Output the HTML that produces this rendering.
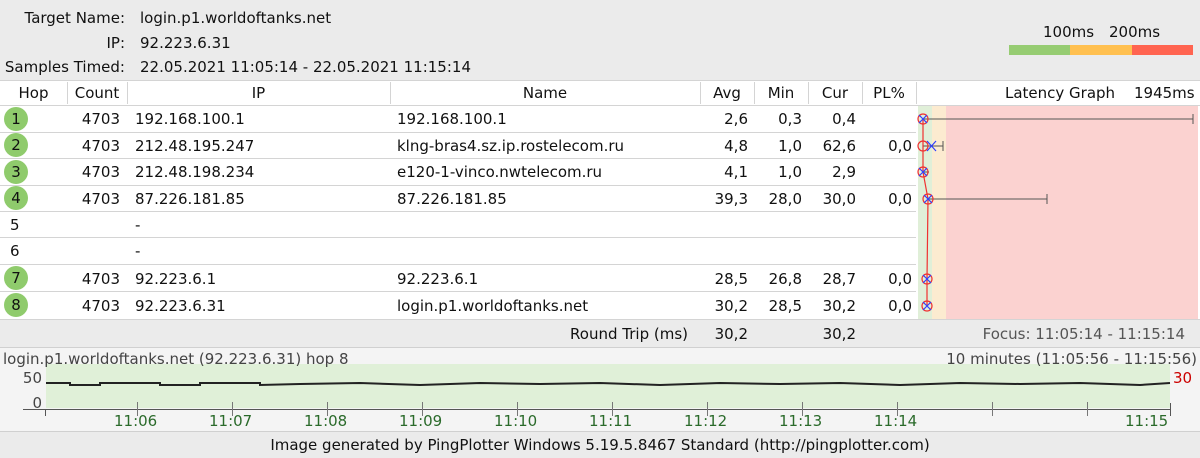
<!DOCTYPE html><html><head><meta charset="utf-8"><style>
*{margin:0;padding:0}body{width:1200px;height:458px;background:#ebebeb;font-family:"DejaVu Sans","Liberation Sans",sans-serif;font-size:15px;color:#111;position:relative;overflow:hidden}
.a{position:absolute;white-space:nowrap;line-height:16px}
.r{text-align:right}
.c{text-align:center}
.circ{position:absolute;width:24px;height:24px;border-radius:50%;background:#8fcb6c;left:4px;text-align:center;line-height:24px;color:#111}
</style></head><body>
<div class="a r" style="left:0;width:125px;top:10px">Target Name:</div>
<div class="a" style="left:140px;top:10px">login.p1.worldoftanks.net</div>
<div class="a r" style="left:0;width:125px;top:35px">IP:</div>
<div class="a" style="left:140px;top:35px">92.223.6.31</div>
<div class="a r" style="left:0;width:125px;top:59px">Samples Timed:</div>
<div class="a" style="left:140px;top:59px">22.05.2021 11:05:14 - 22.05.2021 11:15:14</div>
<div class="a" style="left:1043px;top:24px">100ms</div>
<div class="a" style="left:1109px;top:24px">200ms</div>
<div style="position:absolute;left:1009px;top:45px;width:61px;height:10px;background:#96cc72"></div>
<div style="position:absolute;left:1070px;top:45px;width:62px;height:10px;background:#ffc050"></div>
<div style="position:absolute;left:1132px;top:45px;width:61px;height:10px;background:#ff6450"></div>

<svg style="position:absolute;left:0;top:0" width="1200" height="458">
<rect x="0" y="80" width="1200" height="240" fill="#fff"/>
<g stroke="#d4d4d4" stroke-width="1">
<line x1="0" y1="80.5" x2="1200" y2="80.5"/>
<line x1="0" y1="105.5" x2="1200" y2="105.5"/>
<line x1="0" y1="132.5" x2="916" y2="132.5"/><line x1="0" y1="158.5" x2="916" y2="158.5"/><line x1="0" y1="185.5" x2="916" y2="185.5"/><line x1="0" y1="211.5" x2="916" y2="211.5"/><line x1="0" y1="237.5" x2="916" y2="237.5"/><line x1="0" y1="264.5" x2="916" y2="264.5"/><line x1="0" y1="291.5" x2="916" y2="291.5"/>
<line x1="0" y1="319.5" x2="1200" y2="319.5"/>
<line x1="67.5" y1="82" x2="67.5" y2="104"/><line x1="127.5" y1="82" x2="127.5" y2="104"/><line x1="390.5" y1="82" x2="390.5" y2="104"/><line x1="700.5" y1="82" x2="700.5" y2="104"/><line x1="754.5" y1="82" x2="754.5" y2="104"/><line x1="808.5" y1="82" x2="808.5" y2="104"/><line x1="862.5" y1="82" x2="862.5" y2="104"/><line x1="916.5" y1="82" x2="916.5" y2="104"/>
</g>
<rect x="918" y="106" width="14" height="213" fill="#e0efd8"/>
<rect x="932" y="106" width="14" height="213" fill="#fcebd0"/>
<rect x="946" y="106" width="252" height="213" fill="#fbd2d0"/>
<g stroke="#555" stroke-width="1">
<line x1="923" y1="119" x2="1193" y2="119"/><line x1="1193" y1="114" x2="1193" y2="124"/>
<line x1="923" y1="146" x2="943" y2="146"/><line x1="943" y1="141" x2="943" y2="151"/>
<line x1="923" y1="172" x2="929" y2="172"/>
<line x1="928" y1="199" x2="1047" y2="199"/><line x1="1047" y1="194" x2="1047" y2="204"/>
</g>
<polyline points="923,119 923,146 923,172 928,199 927,279 927,306" fill="none" stroke="#f03030" stroke-width="1.2"/>
<g fill="none" stroke="#f03030" stroke-width="1.2">
<circle cx="923" cy="119" r="5"/><circle cx="923" cy="146" r="5"/><circle cx="923" cy="172" r="5"/><circle cx="928" cy="199" r="5"/><circle cx="927" cy="279" r="5"/><circle cx="927" cy="306" r="5"/></g>
<g stroke="#3040ff" stroke-width="1.2">
<path d="M919 115l8 8M927 115l-8 8"/><path d="M927 141l9 10M936 141l-9 10"/><path d="M919 168l8 8M927 168l-8 8"/><path d="M924 195l8 8M932 195l-8 8"/><path d="M923 275l8 8M931 275l-8 8"/><path d="M923 302l8 8M931 302l-8 8"/></g>
<line x1="0" y1="347.5" x2="1200" y2="347.5" stroke="#d0d0d0"/>
<rect x="0" y="348" width="1200" height="83" fill="#f4f4f4"/>
<rect x="46" y="364" width="1124" height="44" fill="#e0f0d8"/>
<line x1="23" y1="409.5" x2="1170" y2="409.5" stroke="#555"/>
<line x1="45.5" y1="409" x2="45.5" y2="416" stroke="#555"/>
<line x1="1170.5" y1="403" x2="1170.5" y2="416" stroke="#555"/>
<g stroke="#777"><line x1="137.5" y1="402" x2="137.5" y2="416"/><line x1="232.5" y1="402" x2="232.5" y2="416"/><line x1="327.5" y1="402" x2="327.5" y2="416"/><line x1="422.5" y1="402" x2="422.5" y2="416"/><line x1="517.5" y1="402" x2="517.5" y2="416"/><line x1="612.5" y1="402" x2="612.5" y2="416"/><line x1="707.5" y1="402" x2="707.5" y2="416"/><line x1="802.5" y1="402" x2="802.5" y2="416"/><line x1="897.5" y1="402" x2="897.5" y2="416"/><line x1="992.5" y1="402" x2="992.5" y2="416"/><line x1="1087.5" y1="402" x2="1087.5" y2="416"/></g>
<polyline points="46,383 70,383 70,385 100,385 100,383 160,383 160,385 200,385 200,383 260,383 260,385 300,384 360,383 420,385 480,383 540,384 600,383 660,385 720,383 780,384 840,383 900,385 960,383 1020,384 1080,383 1140,385 1170,383" fill="none" stroke="#222" stroke-width="2"/>
<line x1="0" y1="431.5" x2="1200" y2="431.5" stroke="#d0d0d0"/>
</svg>

<div class="a c" style="left:0;width:67px;top:85px">Hop</div>
<div class="a c" style="left:67px;width:60px;top:85px">Count</div>
<div class="a c" style="left:127px;width:263px;top:85px">IP</div>
<div class="a c" style="left:390px;width:310px;top:85px">Name</div>
<div class="a c" style="left:700px;width:54px;top:85px">Avg</div>
<div class="a c" style="left:754px;width:54px;top:85px">Min</div>
<div class="a c" style="left:808px;width:54px;top:85px">Cur</div>
<div class="a c" style="left:862px;width:54px;top:85px">PL%</div>
<div class="a" style="left:1005px;top:85px">Latency Graph</div>
<div class="a" style="left:1134px;top:85px">1945ms</div>

<div class="circ" style="top:107px">1</div><div class="circ" style="top:133px">2</div><div class="circ" style="top:160px">3</div><div class="circ" style="top:186px">4</div><div class="circ" style="top:266px">7</div><div class="circ" style="top:293px">8</div>
<div class="a" style="left:10px;top:217px">5</div><div class="a" style="left:10px;top:243px">6</div>

<div class="a r" style="left:67px;width:53px;top:111px">4703</div><div class="a" style="left:135px;top:111px">192.168.100.1</div><div class="a" style="left:397px;top:111px">192.168.100.1</div><div class="a r" style="left:700px;width:48px;top:111px">2,6</div><div class="a r" style="left:754px;width:48px;top:111px">0,3</div><div class="a r" style="left:808px;width:48px;top:111px">0,4</div>
<div class="a r" style="left:67px;width:53px;top:138px">4703</div><div class="a" style="left:135px;top:138px">212.48.195.247</div><div class="a" style="left:397px;top:138px">klng-bras4.sz.ip.rostelecom.ru</div><div class="a r" style="left:700px;width:48px;top:138px">4,8</div><div class="a r" style="left:754px;width:48px;top:138px">1,0</div><div class="a r" style="left:808px;width:48px;top:138px">62,6</div><div class="a r" style="left:862px;width:50px;top:138px">0,0</div>
<div class="a r" style="left:67px;width:53px;top:164px">4703</div><div class="a" style="left:135px;top:164px">212.48.198.234</div><div class="a" style="left:397px;top:164px">e120-1-vinco.nwtelecom.ru</div><div class="a r" style="left:700px;width:48px;top:164px">4,1</div><div class="a r" style="left:754px;width:48px;top:164px">1,0</div><div class="a r" style="left:808px;width:48px;top:164px">2,9</div>
<div class="a r" style="left:67px;width:53px;top:191px">4703</div><div class="a" style="left:135px;top:191px">87.226.181.85</div><div class="a" style="left:397px;top:191px">87.226.181.85</div><div class="a r" style="left:700px;width:48px;top:191px">39,3</div><div class="a r" style="left:754px;width:48px;top:191px">28,0</div><div class="a r" style="left:808px;width:48px;top:191px">30,0</div><div class="a r" style="left:862px;width:50px;top:191px">0,0</div>
<div class="a" style="left:135px;top:217px">-</div><div class="a" style="left:135px;top:243px">-</div>
<div class="a r" style="left:67px;width:53px;top:271px">4703</div><div class="a" style="left:135px;top:271px">92.223.6.1</div><div class="a" style="left:397px;top:271px">92.223.6.1</div><div class="a r" style="left:700px;width:48px;top:271px">28,5</div><div class="a r" style="left:754px;width:48px;top:271px">26,8</div><div class="a r" style="left:808px;width:48px;top:271px">28,7</div><div class="a r" style="left:862px;width:50px;top:271px">0,0</div>
<div class="a r" style="left:67px;width:53px;top:298px">4703</div><div class="a" style="left:135px;top:298px">92.223.6.31</div><div class="a" style="left:397px;top:298px">login.p1.worldoftanks.net</div><div class="a r" style="left:700px;width:48px;top:298px">30,2</div><div class="a r" style="left:754px;width:48px;top:298px">28,5</div><div class="a r" style="left:808px;width:48px;top:298px">30,2</div><div class="a r" style="left:862px;width:50px;top:298px">0,0</div>

<div class="a r" style="left:400px;width:288px;top:326px">Round Trip (ms)</div>
<div class="a r" style="left:700px;width:48px;top:326px">30,2</div>
<div class="a r" style="left:808px;width:48px;top:326px">30,2</div>
<div class="a r" style="left:900px;width:285px;top:326px;color:#555">Focus: 11:05:14 - 11:15:14</div>

<div class="a" style="left:3px;top:351px;color:#444">login.p1.worldoftanks.net (92.223.6.31) hop 8</div>
<div class="a r" style="left:850px;width:347px;top:351px;color:#444">10 minutes (11:05:56 - 11:15:56)</div>
<div class="a r" style="left:0;width:42px;top:370px;color:#444">50</div>
<div class="a r" style="left:0;width:42px;top:395px;color:#444">0</div>
<div class="a" style="left:1173px;top:370px;color:#c00">30</div>
<div style="position:absolute;top:413px;left:0;color:#2a6a2a">
<div class="a" style="left:114px">11:06</div><div class="a" style="left:209px">11:07</div><div class="a" style="left:304px">11:08</div><div class="a" style="left:399px">11:09</div><div class="a" style="left:494px">11:10</div><div class="a" style="left:589px">11:11</div><div class="a" style="left:684px">11:12</div><div class="a" style="left:779px">11:13</div><div class="a" style="left:874px">11:14</div><div class="a" style="left:1125px">11:15</div>
</div>
<div class="a c" style="left:0;width:1200px;top:437px">Image generated by PingPlotter Windows 5.19.5.8467 Standard (http://pingplotter.com)</div>
</body></html>
